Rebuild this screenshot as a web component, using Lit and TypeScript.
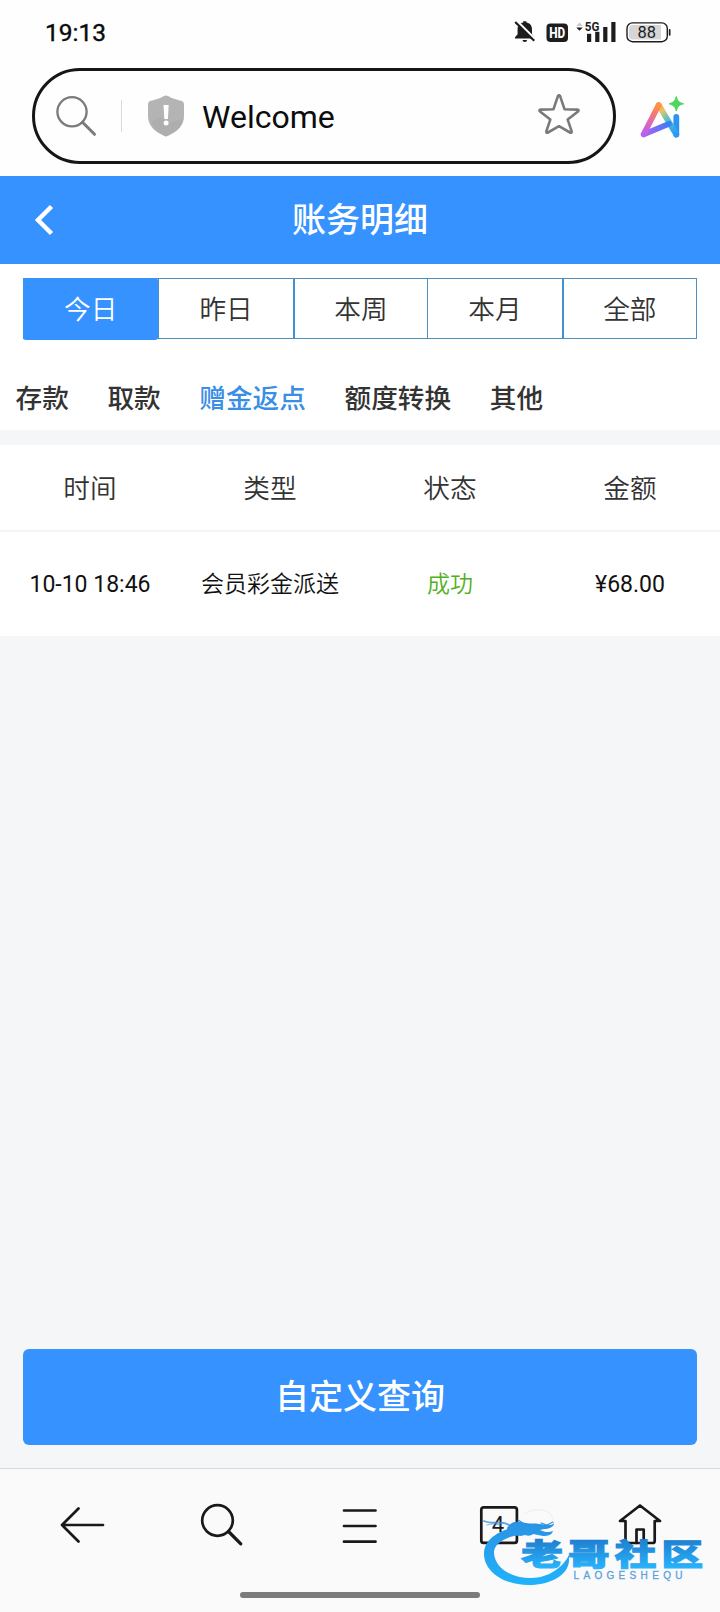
import { LitElement, html, css } from "lit";
import { customElement, property, state } from "lit/decorators.js";
import { classMap } from "lit/directives/class-map.js";

/**
 * Phone status bar: clock on the left, system indicators on the right.
 *
 * @attr time    - Clock text.
 * @attr battery - Battery level in percent.
 */
@customElement("status-bar")
export class StatusBar extends LitElement {
  @property() time = "";
  @property() battery = "";

  static styles = css`
    :host {
      display: flex;
      align-items: center;
      justify-content: space-between;
      box-sizing: border-box;
      height: 68px;
      padding: 0 48px 4px 45px;
      color: #0a0a0a;
    }

    .time {
      padding-top: 2px;
      font-size: 24.5px;
      line-height: 28px;
      -webkit-text-stroke: 0.4px #0a0a0a;
    }

    .indicators {
      display: block;
    }
  `;

  render() {
    return html`
      <span class="time">${this.time}</span>
      <svg class="indicators" width="160" height="28" viewBox="512 18 160 28" fill="#1d1d1f">
        <path d="M515 38.5v-1.200l2.600-3V29c0-3.600 2.400-6 5.600-6.500V21.200h3.200v1.300c3.200.5 5.600 2.900 5.600 6.500v5.300l2.600 3v1.200z" />
        <path d="M522.500 40h4.600a2.300 1.900 0 0 1-4.600 0z" />
        <path d="M516.500 20.500l19 19" stroke="#fff" stroke-width="2.400" />
        <path d="M515.200 22l19 18.800" stroke="#1d1d1f" stroke-width="2.200" />

        <rect x="546.500" y="23.500" width="21.500" height="18.500" rx="4" />
        <text x="557.200" y="38" font-size="15" font-weight="800" fill="#fff" text-anchor="middle" textLength="16" lengthAdjust="spacingAndGlyphs">HD</text>

        <path d="M576.300 26l3.200-3.600 3.200 3.600z" fill="#c8c8c8" />
        <path d="M576.300 27.400h6.400l-3.200 3.300z" />
        <rect x="587" y="33.800" width="4.200" height="8.200" />
        <rect x="595.200" y="31.800" width="4.200" height="10.200" />
        <rect x="603.200" y="27" width="4.200" height="15" />
        <rect x="611.300" y="22" width="4.200" height="20" />
        <text x="584.800" y="31" font-size="13.500" font-weight="700" textLength="14.600" lengthAdjust="spacingAndGlyphs">5G</text>

        <rect x="627" y="22.900" width="40.300" height="18.800" rx="5.500" fill="#fff" stroke="#1d1d1f" stroke-width="1.400" />
        <path d="M632.500 25h28.500v14.600h-28.500a3.500 3.500 0 0 1-3.500-3.500v-7.600a3.500 3.500 0 0 1 3.500-3.500z" fill="#d6d6d6" />
        <rect x="668.800" y="29" width="1.700" height="6.800" rx=".8" />
        <text x="646.700" y="37.800" font-size="16.500" text-anchor="middle">${this.battery}</text>
      </svg>
    `;
  }
}

/**
 * Browser address bar with the page title and the assistant shortcut.
 *
 * @attr label - Title of the open page.
 */
@customElement("address-bar")
export class AddressBar extends LitElement {
  @property() label = "";

  static styles = css`
    :host {
      display: flex;
      align-items: center;
      box-sizing: border-box;
      height: 108px;
      padding: 0 30px 12px 32px;
      gap: 23px;
    }

    .pill {
      display: flex;
      flex: none;
      align-items: center;
      box-sizing: border-box;
      width: 584px;
      height: 96px;
      padding: 0 32px 0 20px;
      border: 3px solid #161618;
      border-radius: 48px;
    }

    .divider {
      width: 1px;
      height: 32px;
      margin: 0 25px 0 24px;
      background: #d9d9d9;
    }

    .label {
      flex: 1;
      margin: 1px 0 0 17px;
      font-size: 32px;
      line-height: 38px;
      color: #0c0c0c;
    }

    svg {
      display: block;
      flex: none;
    }
  `;

  render() {
    return html`
      <div class="pill">
        <svg width="42" height="42" viewBox="55 95 42 42" fill="none" stroke="#7a7a7a">
          <circle cx="72" cy="111.800" r="14.600" stroke-width="2.300" />
          <path d="M82.500 122.300l12 12" stroke-width="3" stroke-linecap="round" />
        </svg>
        <span class="divider"></span>
        <svg width="38" height="42" viewBox="147 95 38 42">
          <path
            d="M163.500 96.200a5 5 0 0 1 5 0c4.500 2.500 8.500 3.600 12.500 4.500 2 .5 3 1.700 3 3.600v11.600c0 10-7 15.800-16.500 20a3.500 3.500 0 0 1-3 0C155 131.700 148 125.900 148 115.900v-11.600c0-1.900 1-3.100 3-3.600 4-.9 8-2 12.500-4.500z"
            fill="#b4b4b4"
          />
          <path d="M151.500 121.500l9-5 7 6.500 16-4c-1.500 8-8 13-16 16.900a3.500 3.500 0 0 1-3 0c-6-2.900-11-6.900-13-14.400z" fill="#a9a9a9" opacity=".55" />
          <path d="M163.500 105h5.200l-.8 14h-3.600z" fill="#fff" />
          <circle cx="166.100" cy="123" r="2.500" fill="#fff" />
        </svg>
        <span class="label">${this.label}</span>
        <svg width="44" height="44" viewBox="538 94 44 44" fill="none" stroke="#7a7a7a" stroke-width="2.600" stroke-linejoin="round">
          <path d="M558.900 96.200q1.100-2 2.200 0l4.400 13 12.800.4q2.200.2.700 1.800l-10.300 8.200 3.900 11.600q.4 2.200-1.600 1.300l-11-6.300-11 6.300q-2 .9-1.600-1.300l3.900-11.600-10.300-8.200q-1.500-1.600.7-1.800l12.800-.4z" />
        </svg>
      </div>
      <svg width="46" height="44" viewBox="640 93 46 44">
        <defs>
          <linearGradient id="left" gradientUnits="userSpaceOnUse" x1="660" y1="102" x2="645" y2="134">
            <stop offset="0" stop-color="#ff9a3d" />
            <stop offset=".3" stop-color="#f77b68" />
            <stop offset=".65" stop-color="#d868c4" />
            <stop offset="1" stop-color="#b45ff5" />
          </linearGradient>
          <linearGradient id="right" gradientUnits="userSpaceOnUse" x1="660" y1="103" x2="677" y2="134">
            <stop offset="0" stop-color="#ff9a3d" />
            <stop offset=".22" stop-color="#e9c36a" />
            <stop offset=".5" stop-color="#4fc3c8" />
            <stop offset="1" stop-color="#2b97f7" />
          </linearGradient>
          <linearGradient id="base" gradientUnits="userSpaceOnUse" x1="645" y1="134" x2="670" y2="123">
            <stop offset="0" stop-color="#b45ff5" />
            <stop offset="1" stop-color="#3d7cf5" />
          </linearGradient>
        </defs>
        <g fill="none" stroke-width="5.800" stroke-linecap="round" stroke-linejoin="round">
          <path d="M677.300 115.800v17.700" stroke="#2c93f3" />
          <path d="M659.700 104l17.600 29.500" stroke="url(#right)" />
          <path d="M644.800 133.300l25-10.500" stroke="url(#base)" />
          <path d="M659.700 104l-15 29.300" stroke="url(#left)" />
        </g>
        <path d="M677.300 95.500c1.300 4.600 2.600 5.900 7.200 7.300-4.600 1.400-5.900 2.700-7.200 7.300-1.300-4.600-2.600-5.900-7.200-7.300 4.600-1.400 5.900-2.700 7.200-7.300z" fill="#4fd65f" stroke="#4fd65f" stroke-linejoin="round" />
      </svg>
    `;
  }
}

/** Browser toolbar along the bottom edge. */
@customElement("browser-toolbar")
export class BrowserToolbar extends LitElement {
  @property() tabs = "";

  static styles = css`
    :host {
      display: flex;
      flex-direction: column;
      align-items: center;
      justify-content: space-between;
      box-sizing: border-box;
      height: 144px;
      padding: 31px 0 14px;
      background: #fafafa;
      border-top: 1px solid #d6d8db;
    }

    .icons {
      display: grid;
      grid-template-columns: repeat(5, 140px);
      justify-items: center;
      align-items: center;
      height: 50px;
    }

    svg {
      display: block;
      fill: none;
      stroke: #19191b;
      stroke-width: 2.7px;
      stroke-linecap: round;
      stroke-linejoin: round;
    }

    .count {
      fill: #19191b;
      stroke: none;
      font-size: 22px;
    }

    .handle {
      width: 240px;
      height: 6px;
      border-radius: 3px;
      background: #7c7c7c;
    }
  `;

  render() {
    return html`
      <div class="icons">
        <svg width="50" height="50" viewBox="55 1500 50 50">
          <path d="M62 1525h41M78.500 1508.500L62 1525l16.500 16.500" />
        </svg>
        <svg width="50" height="50" viewBox="195 1500 50 50">
          <circle cx="217.500" cy="1520.500" r="15.300" />
          <path d="M228.500 1531.500l12.300 12.300" stroke-width="3.200" />
        </svg>
        <svg width="50" height="50" viewBox="335 1500 50 50">
          <path d="M344 1510.500h31.500M344 1526h31.500M344 1541.700h31.500" />
        </svg>
        <svg width="50" height="50" viewBox="475 1500 50 50">
          <rect x="481.300" y="1507.300" width="35.600" height="35.600" rx="2.500" />
          <text class="count" x="498" y="1532" text-anchor="middle">${this.tabs}</text>
        </svg>
        <svg width="50" height="50" viewBox="615 1500 50 50">
          <path d="M625.500 1521h-5.500l20-15.500 20 15.500h-5.300v20a2 2 0 0 1-2 2h-25.200a2 2 0 0 1-2-2z" />
          <path d="M636.500 1543v-13.500h7.200v13.500" />
        </svg>
      </div>
      <span class="handle"></span>
    `;
  }
}

/** Community badge: dragon ring with the site name. */
@customElement("community-badge")
export class CommunityBadge extends LitElement {
  static styles = css`
    :host,
    svg {
      display: block;
    }

    .name {
      font-size: 32px;
      font-weight: 900;
      line-height: 1;
    }

    .latin {
      font-family: "Liberation Sans", Arial, sans-serif;
      font-size: 10px;
      fill: #5aa2dc;
      stroke: #5aa2dc;
      stroke-width: 0.3px;
    }
  `;

  render() {
    return html`
      <svg width="230" height="84" viewBox="478 1506 230 84">
        <defs>
          <linearGradient id="ring" gradientUnits="userSpaceOnUse" x1="0" y1="1515" x2="0" y2="1584">
            <stop offset="0" stop-color="#2a8fe0" />
            <stop offset="1" stop-color="#20b2fb" />
          </linearGradient>
          <linearGradient id="name" gradientUnits="userSpaceOnUse" x1="0" y1="-27" x2="0" y2="3">
            <stop offset="0" stop-color="#1f7fd0" />
            <stop offset="1" stop-color="#29b2fb" />
          </linearGradient>
        </defs>
        <g fill="url(#ring)">
          <path d="M519 1526C499 1530 484 1539 484 1554c0 17 19 31 45 31 22 0 39-10 40-24v-6c-6 12-20 23-38 23-20 0-36-10-37-25-.4-8 8-14 20-17l12-2z" />
          <path d="M507 1528c3-5 7-7 13-6l6 1c5 1 9 0 13 1 6 0 11 3 15-1 0 4-5 6-10 6l-4 1c4 2 9 3 13 1-1 4-5 5-10 5l-10-2c-2 2-5 2-8 1l-4 1c-5-1-9-1-13 0z" />
        </g>
        <g fill="none" stroke="#3a94dd" stroke-linecap="round">
          <path d="M484 1521c6 3 13 1 20 2l8 3" stroke-width="1.800" opacity=".8" />
          <path d="M487 1525c5-2 9-1 14 0" stroke-width="1.200" opacity=".6" />
          <path d="M541 1523l6 2 6-3M523 1523l-5-3" stroke-width="1.300" />
        </g>
        <path d="M524 1514c5-3 12-5 18-4 6 1 10 4 11 9" fill="none" stroke="#f0f1f3" stroke-width="1.500" />
        <g transform="translate(522 1565) scale(1.300 .94)">
          <text class="name" x="-.5 35.300 71.300 107.300" y="0" fill="url(#name)" stroke="url(#name)" stroke-width="1.200">老哥社区</text>
        </g>
        <text class="latin" x="573.500" y="1578.500" textLength="109">LAOGESHEQU</text>
      </svg>
    `;
  }
}

interface Entry {
  time: string;
  type: string;
  status: string;
  amount: string;
}

@customElement("app-root")
export class AppRoot extends LitElement {
  @state() private range = "今日";
  @state() private category = "赠金返点";

  private ranges = ["今日", "昨日", "本周", "本月", "全部"];
  private categories = ["存款", "取款", "赠金返点", "额度转换", "其他"];
  private columns = ["时间", "类型", "状态", "金额"];
  private entries: Entry[] = [
    { time: "10-10 18:46", type: "会员彩金派送", status: "成功", amount: "¥68.00" },
  ];

  static styles = css`
    :host {
      display: flex;
      flex-direction: column;
      position: relative;
      width: 720px;
      height: 1612px;
      overflow: hidden;
      background: #f4f6f8;
      color: #333;
      font-family: Roboto, "Noto Sans CJK SC", sans-serif;
    }

    status-bar,
    address-bar,
    browser-toolbar {
      flex: none;
    }

    status-bar,
    address-bar {
      background: #fefefe;
    }

    .header {
      display: grid;
      grid-template-columns: 88px 1fr 88px;
      align-items: center;
      justify-items: center;
      height: 88px;
      background: #3592ff;
      color: #fff;
    }

    .title {
      margin: 0;
      font-size: 34px;
      font-weight: 500;
      line-height: 48px;
    }

    .filters {
      box-sizing: border-box;
      height: 166px;
      padding: 14px 23px 0;
      background: #fff;
    }

    .ranges {
      display: grid;
      grid-template-columns: repeat(5, 1fr);
      box-sizing: border-box;
      height: 61px;
      border: 1px solid #4f8fc0;
    }

    .range {
      display: flex;
      align-items: center;
      justify-content: center;
      padding-bottom: 3px;
      font-size: 26.67px;
      font-weight: 350;
      cursor: pointer;
    }

    .range + .range {
      border-left: 1px solid #4f8fc0;
    }

    .range:nth-child(odd):not(:first-child) {
      border-left: 2px solid #4290d0;
    }

    .range.active {
      margin: -1px 0 -2px -1px;
      border-radius: 3px;
      background: #3592ff;
      color: #fff;
    }

    .categories {
      display: flex;
      gap: 38.6px;
      margin: 40px 0 0 -7.5px;
      font-size: 26.67px;
      font-weight: 500;
      line-height: 40px;
      white-space: nowrap;
    }

    .category.active {
      color: #3a8ee6;
    }

    .table {
      margin-top: 15px;
      background: #fff;
    }

    .row {
      display: grid;
      grid-template-columns: repeat(4, 1fr);
      align-items: center;
      justify-items: center;
      height: 104px;
      font-size: 23px;
      color: #111;
    }

    .row.head {
      box-sizing: border-box;
      height: 87px;
      padding-bottom: 3px;
      border-bottom: 2px solid #f4f5f7;
      font-size: 26.67px;
      font-weight: 350;
      color: #333;
    }

    .type,
    .status {
      padding-bottom: 4px;
      font-weight: 350;
    }

    .status {
      color: #52b01e;
    }

    .query {
      height: 96px;
      margin: auto 23px 23px;
      padding: 0 0 6px;
      border: 0;
      border-radius: 6px;
      background: #3592ff;
      color: #fff;
      font: inherit;
      font-size: 34px;
      font-weight: 500;
    }

    community-badge {
      position: absolute;
      right: 12px;
      bottom: 22px;
    }
  `;

  render() {
    return html`
      <status-bar time="19:13" battery="88"></status-bar>
      <address-bar label="Welcome"></address-bar>

      <header class="header">
        <svg width="24" height="34" viewBox="0 0 24 34" fill="none" stroke="#fff" stroke-width="4.500">
          <path d="M19.500 3.500L6 17l13.500 13.500" />
        </svg>
        <h1 class="title">账务明细</h1>
      </header>

      <section class="filters">
        <div class="ranges">
          ${this.ranges.map(
            (name) => html`
              <div class=${classMap({ range: true, active: name === this.range })} @click=${() => (this.range = name)}>${name}</div>
            `
          )}
        </div>
        <div class="categories">
          ${this.categories.map(
            (name) => html`
              <span class=${classMap({ category: true, active: name === this.category })} @click=${() => (this.category = name)}>${name}</span>
            `
          )}
        </div>
      </section>

      <section class="table">
        <div class="row head">${this.columns.map((name) => html`<span>${name}</span>`)}</div>
        ${this.entries.map(
          (entry) => html`
            <div class="row">
              <span>${entry.time}</span>
              <span class="type">${entry.type}</span>
              <span class="status">${entry.status}</span>
              <span>${entry.amount}</span>
            </div>
          `
        )}
      </section>

      <button class="query">自定义查询</button>
      <browser-toolbar tabs="4"></browser-toolbar>
      <community-badge></community-badge>
    `;
  }
}
